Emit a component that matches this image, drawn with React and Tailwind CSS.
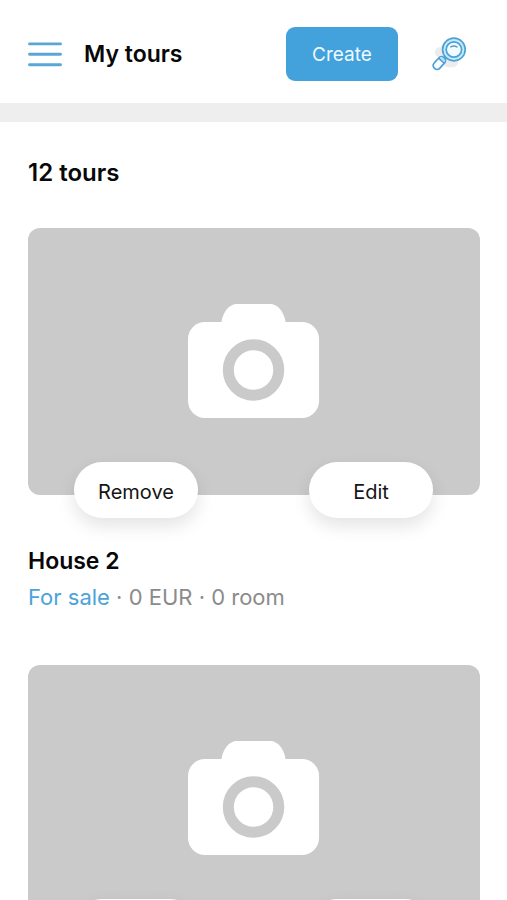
const tours = [
  { id: 1, name: "House 2", status: "For sale", details: "0 EUR · 0 room" },
  { id: 2, name: "House 1", status: "For sale", details: "0 EUR · 0 room" },
];

function MenuIcon() {
  return (
    <svg width="34" height="26" viewBox="0 0 34 26" fill="none" stroke="#5aa6d6" strokeWidth="2.9" strokeLinecap="round" aria-hidden="true">
      <path d="M1.5 2.900H32.500M1.500 13.300H32.500M1.500 23.700H32.500" />
    </svg>
  );
}

function SearchIcon() {
  return (
    <svg width="36" height="36" viewBox="0 0 36 36" fill="none" aria-hidden="true">
      <path d="M4.500 19C2.500 14 6 10.500 10 11.500C11 7 16 4 20 7L27 24C28 29 24 32 20 31C17 32 14 31 13 28L8 22Z" fill="#ececee" />
      <path d="M16 20.500L12.500 24" stroke="#58a7d6" strokeWidth="3.400" />
      <circle cx="22.900" cy="13.500" r="11.300" fill="#c4ebfa" stroke="#4da1d4" strokeWidth="1.700" />
      <circle cx="22.900" cy="13.500" r="7.700" fill="#f2fbff" stroke="#4da1d4" strokeWidth="1.700" />
      <path d="M19.800 10.900Q22.900 8.900 26 10.900" stroke="#5a9fc8" strokeWidth="1.500" strokeLinecap="round" />
      <g transform="rotate(42 8.500 26.800)">
        <rect x="4.700" y="20" width="7.600" height="14.200" rx="3.400" fill="#f6fcff" stroke="#4da1d4" strokeWidth="1.700" />
        <path d="M5.600 21.200H11.400V23.500H5.600Z" fill="#b5e2f5" />
        <path d="M4.700 24H12.300" stroke="#4da1d4" strokeWidth="1.500" />
      </g>
    </svg>
  );
}

function CameraIcon() {
  return (
    <svg className="w-[29%]" viewBox="0 0 131 114" fill="none" aria-hidden="true">
      <path d="M17 18H33.500C35 8 41 0 49 0H82C90 0 96 8 97.500 18H114A17 17 0 0 1 131 35V97A17 17 0 0 1 114 114H17A17 17 0 0 1 0 97V35A17 17 0 0 1 17 18Z" fill="white" />
      <circle cx="65.500" cy="66" r="25.200" stroke="#cacaca" strokeWidth="11" />
    </svg>
  );
}

function PillButton({ children, label }) {
  return (
    <button type="button" aria-label={label} className="h-14 w-[124px] rounded-full bg-white pt-1 text-[20px] text-[#151515] shadow-[0_8px_18px_rgba(0,0,0,0.11)]">
      {children}
    </button>
  );
}

function TourCard({ tour }) {
  return (
    <article>
      <div className="flex aspect-[452/267] items-center justify-center rounded-xl bg-[#cacaca]">
        <CameraIcon />
      </div>
      <div className="relative -mt-[33px] flex justify-between pr-[47px] pl-[46px]">
        <PillButton label={`Remove ${tour.name}`}>Remove</PillButton>
        <PillButton label={`Edit ${tour.name}`}>Edit</PillButton>
      </div>
      <h3 className="mt-[25px] text-[23px] leading-9 font-semibold">{tour.name}</h3>
      <p className="text-[22px] leading-9 text-[#8b8b8b]">
        <span className="text-[#4da3d8]">{tour.status}</span> · {tour.details}
      </p>
    </article>
  );
}

export default function App() {
  return (
    <div className="flex h-screen flex-col overflow-hidden bg-white font-['Inter','Liberation_Sans',sans-serif] text-[#080808]">
      <header className="flex shrink-0 items-center border-b-[19px] border-[#eeeeee] px-7 pt-[27px] pb-[22px]">
        <button type="button" aria-label="Open menu">
          <MenuIcon />
        </button>
        <h1 className="ml-[22px] text-[23px] leading-9 font-semibold">My tours</h1>
        <button type="button" className="ml-auto h-[54px] w-28 rounded-[9px] bg-[#43a1dc] pt-0.5 text-[19px] text-[#eefaff]">
          Create
        </button>
        <button type="button" aria-label="Search tours" className="mr-3 ml-[33px]">
          <SearchIcon />
        </button>
      </header>
      <main className="min-h-0 flex-1 overflow-y-auto pr-[27px] pl-7 [scrollbar-width:none]">
        <h2 className="mt-[33px] mb-[37px] text-[24px] leading-9 font-semibold">12 tours</h2>
        <div className="flex flex-col gap-[50px]">
          {tours.map((tour) => (
            <TourCard key={tour.id} tour={tour} />
          ))}
        </div>
      </main>
    </div>
  );
}
